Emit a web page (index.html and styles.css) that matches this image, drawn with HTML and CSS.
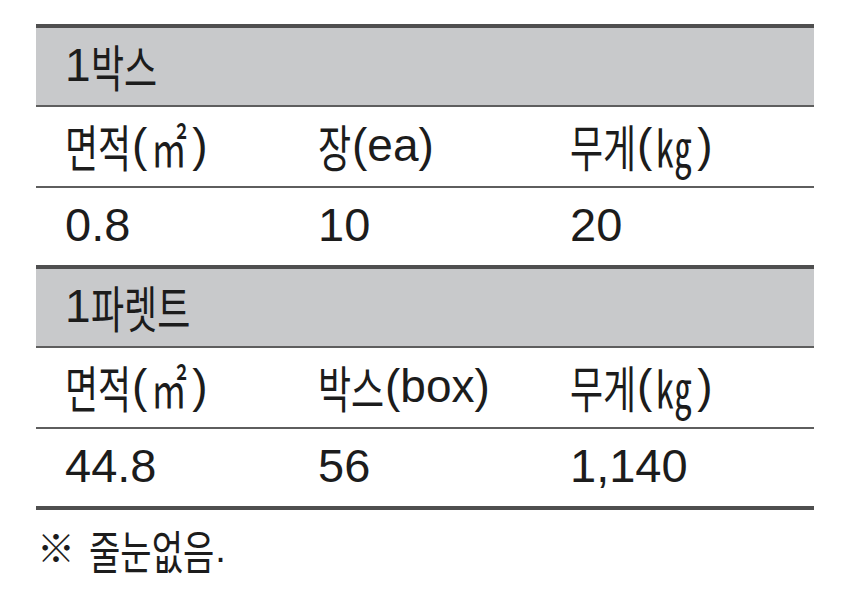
FILE: index.html
```html
<!DOCTYPE html>
<html lang="ko">
<head>
<meta charset="utf-8">
<link rel="stylesheet" href="styles.css">
</head>
<body>
<div class="spec">
  <div class="row band"><div class="cell">1<span class="ko n2">박스</span></div></div>
  <div class="row head">
    <div class="cell"><span class="ko n2">면적</span>(<span class="ko n1 unit">㎡</span>)</div>
    <div class="cell"><span class="ko n1">장</span>(ea)</div>
    <div class="cell"><span class="ko n2">무게</span>(<span class="ko n1 unit">㎏</span>)</div>
  </div>
  <div class="row val end">
    <div class="cell">0.8</div>
    <div class="cell">10</div>
    <div class="cell">20</div>
  </div>
  <div class="row band"><div class="cell">1<span class="ko n3">파렛트</span></div></div>
  <div class="row head">
    <div class="cell"><span class="ko n2">면적</span>(<span class="ko n1 unit">㎡</span>)</div>
    <div class="cell"><span class="ko n2">박스</span>(box)</div>
    <div class="cell"><span class="ko n2">무게</span>(<span class="ko n1 unit">㎏</span>)</div>
  </div>
  <div class="row val end">
    <div class="cell">44.8</div>
    <div class="cell">56</div>
    <div class="cell">1,140</div>
  </div>
</div>
<p class="note"><span class="mark">※</span><span class="ko n4">줄눈없음</span><span class="dot">.</span></p>
</body>
</html>
```
FILE: styles.css
```css
html, body {
  margin: 0;
  padding: 0;
  background: #ffffff;
}
body {
  font-family: "Liberation Sans", "Noto Sans CJK KR", sans-serif;
  color: #1c1c1c;
}
.spec {
  width: 778px;
  margin: 24px 0 0 36px;
  border-top: 4px solid #4f4f4f;
}
.row {
  display: grid;
  grid-template-columns: 253px 252px 1fr;
  border-bottom: 2px solid #5e5e5e;
  font-size: 46px;
}
.row.band {
  grid-template-columns: 1fr;
  background: #c8c9cb;
  height: 77px;
}
.row.head {
  height: 79px;
}
.row.val {
  height: 77px;
  font-size: 47px;
}
.row.end {
  border-bottom: 4px solid #4f4f4f;
}
.cell {
  display: flex;
  align-items: center;
  padding-left: 29px;
  padding-bottom: 4px;
  line-height: 1;
  white-space: nowrap;
}
.ko {
  display: inline-block;
  font-family: "Noto Sans CJK KR", sans-serif;
  font-size: 50px;
  line-height: 1;
  transform: scaleX(0.72);
  transform-origin: 0 50%;
}
.ko.n1 { margin-right: -12px; }
.ko.n2 { margin-right: -25px; }
.ko.n3 { margin-right: -39px; }
.ko.n4 { margin-right: -53px; }
.ko.unit {
  margin-left: 4px;
  margin-right: -9px;
}
.note {
  margin: 14px 0 0 37px;
  font-size: 38px;
  line-height: 50px;
  display: flex;
  align-items: center;
}
.note .mark {
  margin-right: 14px;
}
.note .ko {
  font-size: 46px;
  transform: scaleX(0.74);
}
.note .ko.n4 {
  margin-right: -46px;
}
.note .dot {
  margin-left: 3px;
}
```
